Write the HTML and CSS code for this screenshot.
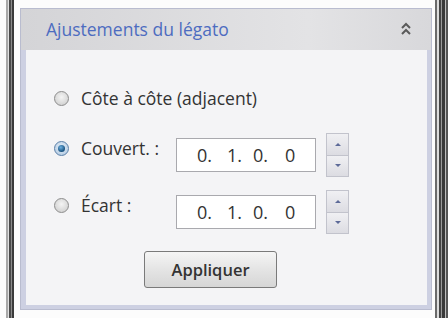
FILE: index.html
```html
<!DOCTYPE html>
<html lang="fr">
<head>
    <meta charset="UTF-8">
    <meta name="viewport" content="width=device-width, initial-scale=1.0">
    <title>Ajustements du légato</title>
    <link rel="stylesheet" href="styles.css">
</head>
<body>

    <div class="screen">
        <div class="frame frame-left"></div>

        <div class="panel">
            <!-- Header -->
            <div class="panel-header">
                <span class="panel-title">Ajustements du légato</span>
                <svg class="collapse" width="10" height="14" viewBox="0 0 10 14">
                    <path d="M1 6 L5 2 L9 6" fill="none" stroke="#5a5a5a" stroke-width="2"/>
                    <path d="M1 12 L5 8 L9 12" fill="none" stroke="#5a5a5a" stroke-width="2"/>
                </svg>
            </div>

            <div class="panel-body">
                <!-- Adjacent -->
                <div class="option option-single">
                    <span class="radio"></span>
                    <span class="option-text">Côte à côte (adjacent)</span>
                </div>

                <!-- Overlap -->
                <div class="option option-overlap">
                    <div class="option-label">
                        <span class="radio checked"></span>
                        <span class="option-text">Couvert. :</span>
                    </div>
                    <div class="field"><span class="d1">0.</span><span class="d2">1.</span><span class="d3">0.</span><span>0</span></div>
                    <div class="spinner">
                        <span class="spin up"></span>
                        <span class="spin down"></span>
                    </div>
                </div>

                <!-- Gap -->
                <div class="option option-gap">
                    <div class="option-label">
                        <span class="radio"></span>
                        <span class="option-text">Écart :</span>
                    </div>
                    <div class="field"><span class="d1">0.</span><span class="d2">1.</span><span class="d3">0.</span><span>0</span></div>
                    <div class="spinner">
                        <span class="spin up"></span>
                        <span class="spin down"></span>
                    </div>
                </div>

                <div class="apply">Appliquer</div>
            </div>
        </div>

        <div class="frame frame-right"></div>
    </div>

</body>
</html>
```

FILE: styles.css
```css
body {
    margin: 0;
    background: #fcfcfc;
    font-family: "Open Sans", "Noto Sans", sans-serif;
    color: #333;
}

.screen {
    display: flex;
    height: 318px;
    width: 448px;
    overflow: hidden;
}

.frame {
    height: 100%;
}

.frame-left {
    width: 14px;
    background: linear-gradient(to right, #fcfcfc 0 6px, #a8a8a8 6px 8px, #e0e0e0 8px 9px, #4a4a4a 9px 11px, #8a8a8a 11px 12px, #3a3a3a 12px 14px);
}

.frame-right {
    width: 13px;
    margin-left: 3px;
    background: linear-gradient(to right, #6a6a6a 0 2px, #dcdcdc 2px 4px, #444 4px 6px, #9a9a9a 6px 7px, #3a3a3a 7px 10px, #bdbdbd 10px 11px, #555 11px 13px);
}

.panel {
    width: 412px;
    height: 302px;
    margin-top: 8px;
    margin-left: 6px;
    box-sizing: border-box;
    border: 1px solid #b9bccf;
    background: #cdd0e2;
    display: flex;
    flex-direction: column;
}

.panel-header {
    height: 41px;
    flex: none;
    display: flex;
    align-items: center;
    padding-left: 25px;
    background: linear-gradient(to right, #d4d4d7, #e3e3e5 70%, #d8d8db);
}

.panel-title {
    font-size: 17.5px;
    color: #4d6cc0;
    margin-top: -1px;
}

.collapse {
    margin-left: auto;
    margin-right: 20px;
    margin-top: -1px;
}

.panel-body {
    flex: 1;
    margin: 0 4px 4px 5px;
    background: #f4f4f6;
    padding: 36px 0 0 28px;
}

.option {
    display: flex;
}

.option-single {
    height: 24px;
    align-items: center;
}

.option-overlap {
    height: 44px;
    margin-top: 23px;
}

.option-gap {
    height: 44px;
    margin-top: 13px;
}

.option-label {
    width: 122px;
    display: flex;
    align-items: center;
    height: 20px;
    margin-top: 5px;
}

.option-text {
    font-size: 17.5px;
    line-height: 20px;
}

.radio {
    width: 13px;
    height: 13px;
    border-radius: 50%;
    border: 1px solid #8c8c8c;
    background: radial-gradient(circle at 50% 40%, #f4f4f4, #c9c9c9);
    margin-right: 12px;
    flex: none;
    position: relative;
}

.radio.checked {
    border-color: #5a7fa8;
    background: radial-gradient(circle at 50% 40%, #e8f0f8, #a9c4df);
}

.radio.checked::after {
    content: "";
    position: absolute;
    left: 3px;
    top: 3px;
    width: 7px;
    height: 7px;
    border-radius: 50%;
    background: radial-gradient(circle at 40% 35%, #6cb0e0, #17507e 70%);
}

.field {
    width: 140px;
    height: 34px;
    margin-top: 5px;
    box-sizing: border-box;
    border: 1px solid #a9a9ae;
    background: #fff;
    display: flex;
    align-items: center;
    padding-left: 20px;
    font-size: 18px;
    color: #333;
}

.field .d1 {
    width: 30px;
}

.field .d2 {
    width: 26px;
}

.field .d3 {
    width: 32px;
}

.spinner {
    width: 23px;
    height: 44px;
    margin-left: 10px;
    display: flex;
    flex-direction: column;
}

.spin {
    flex: 1;
    box-sizing: border-box;
    border: 1px solid #c2c3cc;
    background: linear-gradient(#f0f0f3, #dcdce2);
    display: flex;
    align-items: center;
    justify-content: center;
}

.spin.down {
    border-top: none;
}

.spin::after {
    content: "";
    border-left: 3px solid transparent;
    border-right: 3px solid transparent;
}

.spin.up::after {
    border-bottom: 3px solid #5d6a98;
}

.spin.down::after {
    border-top: 3px solid #5d6a98;
}

.apply {
    width: 133px;
    height: 37px;
    margin: 17px 0 0 90px;
    box-sizing: border-box;
    border: 1px solid #7a7a7a;
    border-radius: 3px;
    background: linear-gradient(#f5f5f5, #e4e4e4 50%, #d6d6d6);
    display: flex;
    align-items: center;
    justify-content: center;
    font-size: 16.5px;
    font-weight: 600;
    color: #333;
}
```
